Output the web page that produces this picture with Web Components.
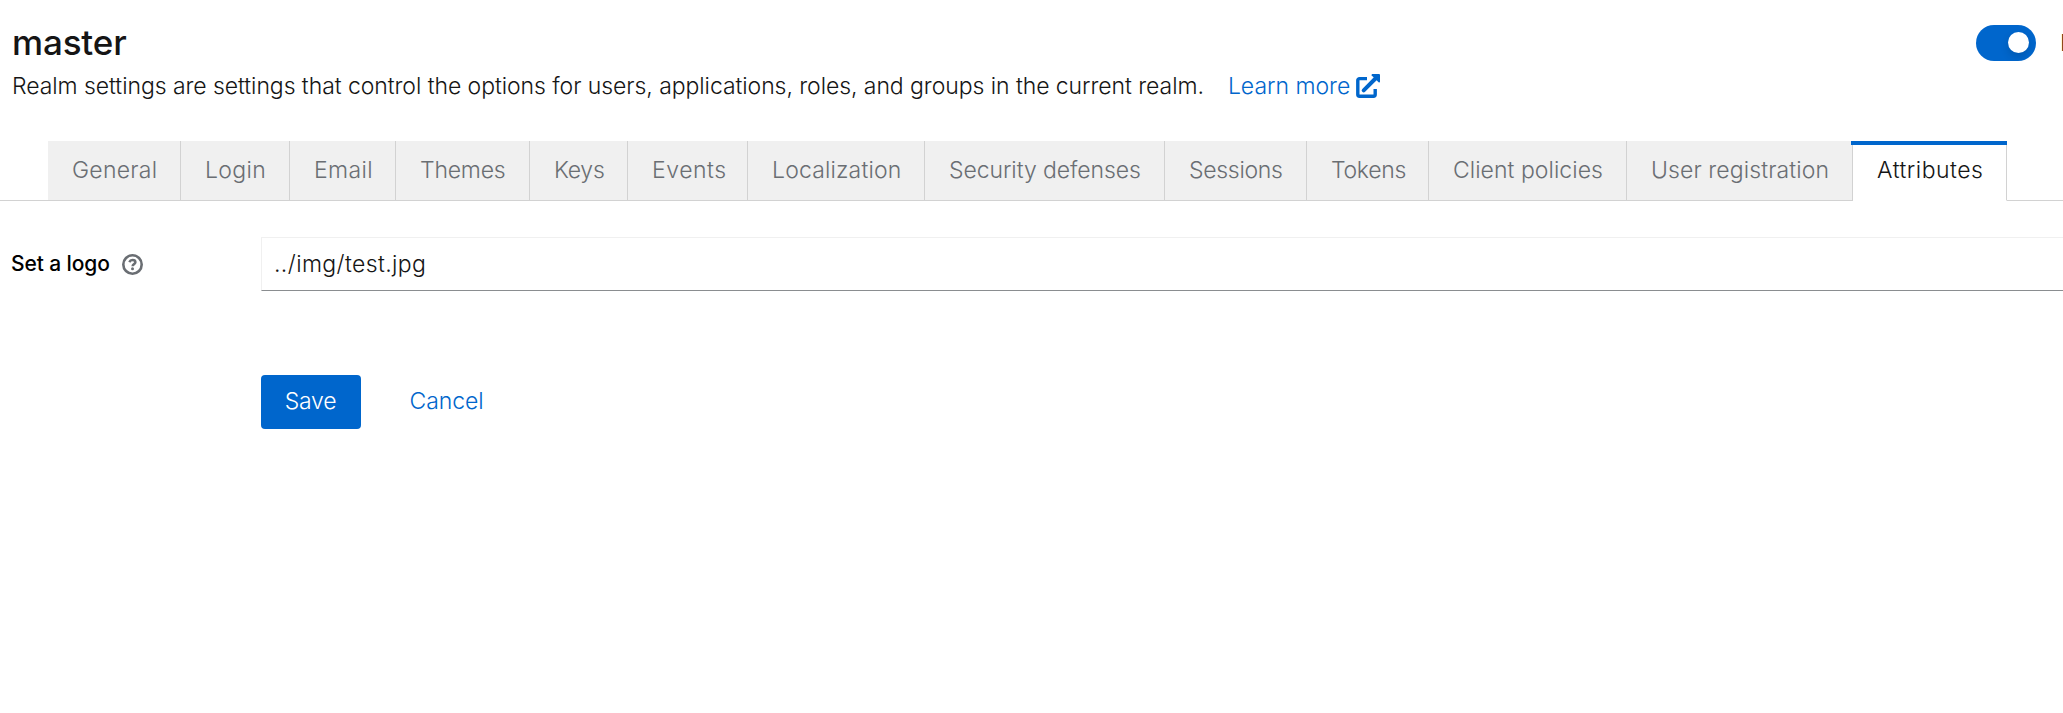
<!DOCTYPE html>
<html lang="en"><head><meta charset="utf-8"><title>Realm settings</title>
<style>
html,body{margin:0;height:100%;overflow:hidden;background:#fff}
body{font:300 23px/36px Inter,"Liberation Sans",sans-serif;color:#151515}
</style></head><body>
<realm-page></realm-page>
<script>
const define=(name,html,init)=>customElements.define(name,class extends HTMLElement{
  connectedCallback(){
    if(this.shadowRoot)return;
    const t=document.createElement('template');
    t.innerHTML=html;
    this.attachShadow({mode:'open'}).append(t.content.cloneNode(true));
    if(init)init(this,this.shadowRoot);
  }
});

define('toggle-switch',`<style>
:host{display:flex;align-items:center;gap:24px;flex:none;width:87px;height:36px;overflow:hidden;white-space:nowrap}
.track{box-sizing:border-box;flex:none;width:60px;height:36px;border-radius:18px;background:#06c;padding:7px 7px 0 32px}
.knob{width:21px;height:21px;border-radius:50%;background:#fff;box-shadow:0 4px 8px rgba(3,3,3,.14)}
.label{line-height:34px}
</style><div class="track"><div class="knob"></div></div><span class="label"><slot></slot></span>`);

define('external-link',`<style>
:host{display:inline-flex;align-items:center;color:#06c}
a{color:inherit;text-decoration:none;letter-spacing:-.03px}
svg{width:24px;height:24px;margin-left:6px;margin-top:-1px;flex:none}
</style><a><slot></slot></a><svg viewBox="0 0 24 24"><path d="M11 4.600H3.500a1.700 1.700 0 0 0-1.700 1.700v14.200a1.700 1.700 0 0 0 1.700 1.700h14a1.700 1.700 0 0 0 1.700-1.700V15" fill="none" stroke="currentColor" stroke-width="3.400"/><path d="M7.700 16.300 20 4" stroke="currentColor" stroke-width="4" stroke-linecap="round"/><path d="M16.200 0H23q1 0 1 1v6.800q-.3 1.200-1.400.5L15.700 1.400Q15.300.3 16.200 0Z" fill="currentColor"/></svg>`);

define('page-header',`<style>
:host{display:flex;justify-content:space-between;padding:19px 0 0 12px}
h1{margin:0 0 3px;font-size:35px;font-weight:500;line-height:46px;letter-spacing:-.15px}
.info{display:flex;align-items:center;height:36px;white-space:nowrap}
.desc{letter-spacing:-.065px}
external-link{margin-left:24px}
toggle-switch{margin-top:6px}
</style><div><h1><slot name="title"></slot></h1><div class="info"><span class="desc"><slot></slot></span><external-link>Learn more</external-link></div></div><toggle-switch>Enabled</toggle-switch>`);

define('tab-item',`<style>
:host{display:block;box-sizing:border-box;flex:none;height:60px;padding:11px 0 0 24px;background:#f0f0f0;border-right:1px solid #d2d2d2;border-bottom:1px solid #d2d2d2;color:#6a6e73;white-space:nowrap}
:host([current]){position:relative;background:#fff;color:#151515;border-bottom-color:#fff}
:host([current])::before{content:"";position:absolute;left:-2px;right:-1px;top:0;height:4px;background:#06c}
</style><slot></slot>`,(el)=>{
  el.style.width=el.getAttribute('width')+'px';
  el.style.letterSpacing=el.getAttribute('tracking')+'px';
});

define('tab-bar',`<style>
:host{display:flex;height:60px;margin-top:37px}
:host::before,:host::after{content:"";box-sizing:border-box;height:60px;border-bottom:1px solid #d2d2d2;width:48px;flex:none}
:host::after{width:auto;flex:1}
</style><slot></slot>`);

define('help-icon',`<style>:host{display:block;width:21px;height:21px;color:#6a6e73}svg{display:block}</style>
<svg width="21" height="21" viewBox="0 0 21 21" fill="none" stroke="currentColor"><circle cx="10.500" cy="10.500" r="9.200" stroke-width="2.600"/><path d="M7.300 8.100C8 6.700 9 6.100 10.500 6.100c1.800 0 2.900.9 2.900 2.200 0 1.900-2.800 1.800-2.800 3.900" stroke-width="2.500"/><circle cx="10.500" cy="14.700" r="1.500" fill="currentColor" stroke="none"/></svg>`);

define('form-field',`<style>
:host{display:grid;grid-template-columns:249px 1fr;padding-left:12px;margin-top:36px}
.label{display:flex;align-items:center;height:54px;gap:12px;box-sizing:border-box}
label{font-size:21px;font-weight:550;color:#000;letter-spacing:-.1px;margin-left:-1px}
input{box-sizing:border-box;width:calc(100% + 12px);height:54px;margin:0;padding:0 12px;border:1px solid #f0f0f0;border-bottom-color:#8a8d90;border-radius:0;background:#fff;color:#151515;font:inherit;letter-spacing:.38px;outline:0}
</style><div class="label"><label><slot></slot></label><help-icon></help-icon></div><input>`,(el,r)=>{
  r.querySelector('input').value=el.getAttribute('value');
});

define('action-button',`<style>
:host{display:block}
button{display:block;font:inherit;letter-spacing:-.1px;color:#06c;background:none;border:0;border-radius:4px;height:54px;padding:0 1px 2px 0;width:120px}
:host([primary]) button{width:100px;background:#06c;color:#fff;letter-spacing:-.2px}
</style><button><slot></slot></button>`);

define('realm-page',`<style>
:host{display:block;width:100%;height:100%;overflow:hidden}
.actions{display:flex;gap:26px;margin:84px 0 0 261px}
</style>
<page-header><span slot="title">master</span>Realm settings are settings that control the options for users, applications, roles, and groups in the current realm.</page-header>
<tab-bar>
<tab-item width="133" tracking=".25">General</tab-item>
<tab-item width="109" tracking=".35">Login</tab-item>
<tab-item width="106" tracking=".4">Email</tab-item>
<tab-item width="134" tracking="-.22">Themes</tab-item>
<tab-item width="98" tracking="-.25">Keys</tab-item>
<tab-item width="120" tracking=".55">Events</tab-item>
<tab-item width="177" tracking=".15">Localization</tab-item>
<tab-item width="240" tracking="-.08">Security defenses</tab-item>
<tab-item width="142" tracking="-.3">Sessions</tab-item>
<tab-item width="122" tracking="-.3">Tokens</tab-item>
<tab-item width="198" tracking=".04">Client policies</tab-item>
<tab-item width="226" tracking=".1">User registration</tab-item>
<tab-item width="154" tracking=".5" current>Attributes</tab-item>
</tab-bar>
<form-field value="../img/test.jpg">Set a logo</form-field>
<div class="actions"><action-button primary>Save</action-button><action-button>Cancel</action-button></div>`);
</script></body></html>
